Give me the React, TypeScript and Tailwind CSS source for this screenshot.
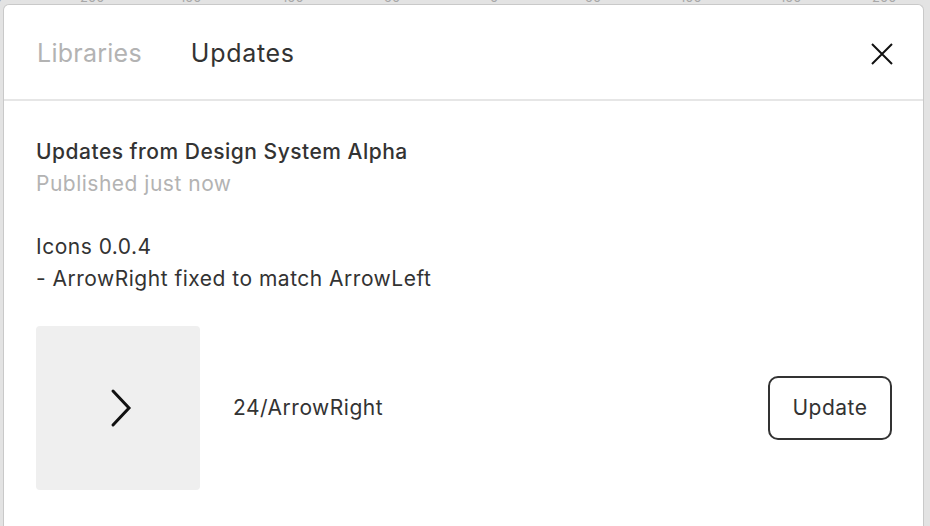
import React from "react";

const rulerLabels = ["0", "200", "150", "100", "50", "0", "50", "100", "150", "200"];
const rulerX = [-6, 80, 180, 282, 384, 490, 585, 680, 780, 872];

export default function App() {
  return (
    <div
      className="w-[930px] h-[526px] bg-[#e3e3e3] overflow-hidden flex flex-col"
      style={{ fontFamily: "Inter, 'Noto Sans', sans-serif" }}
    >
      <div className="relative h-[4px] shrink-0">
        {rulerLabels.map((l, i) => (
          <span
            key={i}
            className="absolute top-[-9px] text-[13px] leading-[13px] text-[#a8a8a8]"
            style={{ left: rulerX[i] }}
          >
            {l}
          </span>
        ))}
      </div>
      <div className="flex-1 ml-[3px] mr-[6px] bg-white rounded-t-[6px] border border-[#c9c9c9] border-b-0 flex flex-col">
        <div className="h-[96px] shrink-0 flex items-center pt-[3px] pl-[33px] pr-[30px] border-b-2 border-[#e6e6e6]">
          <span className="text-[25px] text-[#b3b3b3] tracking-[0.25px]">Libraries</span>
          <span className="ml-[49px] text-[25px] text-[#333333] tracking-[0.7px]">Updates</span>
          <svg className="ml-auto" width="22" height="22" viewBox="0 0 22 22">
            <path d="M1 1L21 21M21 1L1 21" stroke="#111" strokeWidth="2" />
          </svg>
        </div>
        <div className="pl-[32px] pr-[31px] pt-[35px] text-[21px] leading-[32px] text-[#333333] tracking-[0.5px]">
          <div className="font-medium">Updates from Design System Alpha</div>
          <div className="text-[#b3b3b3]">Published just now</div>
          <div className="mt-[31px]">Icons 0.0.4</div>
          <div>- ArrowRight fixed to match ArrowLeft</div>
          <div className="mt-[31px] flex items-center">
            <div className="w-[164px] h-[164px] rounded-[4px] bg-[#efefef] flex items-center justify-center">
              <svg width="24" height="40" viewBox="0 0 24 40" className="ml-[6px]">
                <path d="M4 3L20 20L4 37" stroke="#111" strokeWidth="3" fill="none" strokeLinecap="round" strokeLinejoin="miter" />
              </svg>
            </div>
            <div className="ml-[33px]">24/ArrowRight</div>
            <button className="ml-auto w-[124px] h-[64px] rounded-[10px] border-2 border-[#333333] text-[21px] text-[#333333] tracking-[0.5px]">
              Update
            </button>
          </div>
        </div>
      </div>
    </div>
  );
}
